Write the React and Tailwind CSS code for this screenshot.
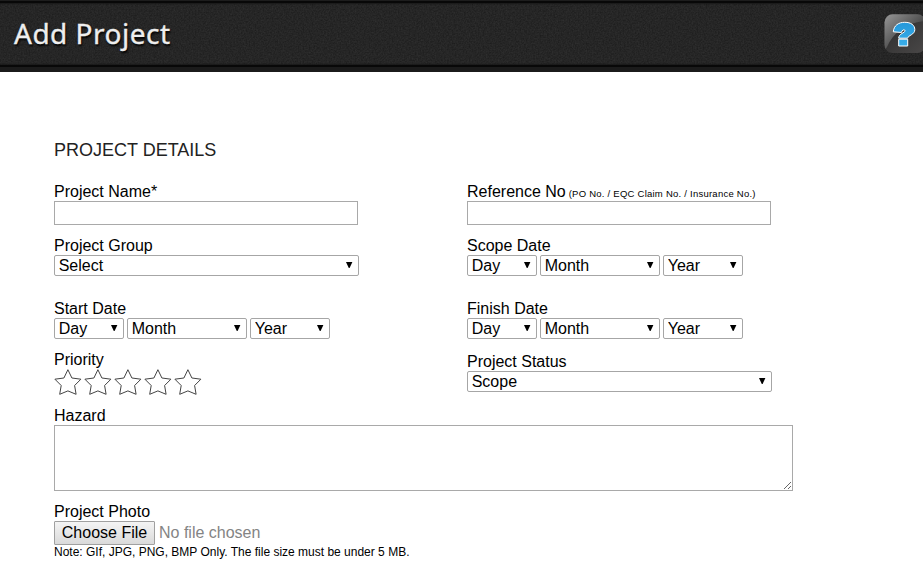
import React from "react";

function Label({ children }) {
  return <label className="block h-[19px] whitespace-nowrap text-base leading-[19px]">{children}</label>;
}

function Select({ value, width }) {
  return (
    <div className={`relative h-[21px] shrink-0 ${width}`}>
      <select className="block h-[21px] w-full appearance-none rounded-[2px] border border-[#a6a6a6] bg-white pl-[3.7px] text-base leading-[19px] text-black outline-none">
        <option>{value}</option>
      </select>
      <svg className="pointer-events-none absolute right-[6px] top-[7px] h-[7px] w-[7px]" viewBox="0 0 7 7">
        <path d="M0 0H6.4L3.6 6H2.8Z" fill="#000" />
      </svg>
    </div>
  );
}

function DateSelects() {
  return (
    <div className="flex gap-[3px]">
      <Select value="Day" width="w-[70px]" />
      <Select value="Month" width="w-[120px]" />
      <Select value="Year" width="w-[80px]" />
    </div>
  );
}

function TextField() {
  return <input type="text" className="block h-6 w-[304px] border border-[#a9a9a9] bg-white px-1 text-base outline-none" />;
}

function Star() {
  return (
    <svg className="h-7 w-[30px]" viewBox="0 0 30 28" fill="none">
      <path
        d="M13.9 0.7L17.9 9L26.9 10.2L20.6 16.5L22.1 25.3L13.9 21.9L5.7 25.3L7.2 16.5L0.9 10.2L9.9 9Z"
        stroke="#444"
        strokeWidth="1"
      />
    </svg>
  );
}

function HelpIcon() {
  return (
    <svg className="h-10 w-[39px] shrink-0" viewBox="0 0 39 40">
      <defs>
        <linearGradient id="gloss" x1="0" y1="0" x2="0.6" y2="0.6">
          <stop offset="0" stopColor="#999" />
          <stop offset="1" stopColor="#484848" />
        </linearGradient>
        <linearGradient id="plate" x1="0" y1="0" x2="1" y2="1">
          <stop offset="0" stopColor="#282828" />
          <stop offset="1" stopColor="#4a4848" />
        </linearGradient>
        <linearGradient id="mark" x1="0" y1="0" x2="0" y2="1">
          <stop offset="0" stopColor="#2598da" />
          <stop offset="1" stopColor="#39aee9" />
        </linearGradient>
        <clipPath id="tile">
          <rect x="0.5" y="0.3" width="41" height="38.7" rx="8" />
        </clipPath>
      </defs>
      <g clipPath="url(#tile)">
        <rect width="42" height="39" fill="url(#plate)" />
        <path d="M0 0H41V7C24 8 9 18 3 33L0 37Z" fill="url(#gloss)" />
      </g>
      <path
        d="M9.3 17.8C9.8 11.5 14.5 8.3 20.7 8.3C27 8.3 30.8 11.2 30.8 15.6C30.8 20.8 24 21.3 23.6 24.2H14.7C14.7 19.4 21 19 21 16.7C21 15.2 18 15.4 17.4 18.5Z M14.7 25.2H23.7V32H14.7Z"
        fill="url(#mark)"
        stroke="#fff"
        strokeWidth="1"
        strokeLinejoin="round"
      />
    </svg>
  );
}

function Header() {
  return (
    <header className="relative h-[72px] border-b-[5px] border-[#1b1b1b] bg-[#262626]">
      <svg className="absolute inset-0 h-[67px] w-full" aria-hidden="true">
        <filter id="grain" colorInterpolationFilters="sRGB">
          <feTurbulence type="fractalNoise" baseFrequency="0.65" numOctaves="2" seed="4" />
          <feColorMatrix values="0.12 0 0 0 0.09  0.12 0 0 0 0.09  0.12 0 0 0 0.09  0 0 0 0 1" />
        </filter>
        <rect width="100%" height="100%" filter="url(#grain)" opacity="0.8" />
      </svg>
      <div className="relative flex h-[67px] flex-col">
        <div className="h-px bg-[#1d1d1d]" />
        <div className="h-[2px] bg-[#080808]" />
        <div className="h-[2px] bg-linear-to-b from-[#181818] to-transparent" />
        <div className="flex h-[58px] items-start justify-between pl-[14px]">
          <h1 className="mt-[8px] whitespace-nowrap font-['Noto_Sans','Open_Sans',sans-serif] text-[28px] leading-[40px] tracking-[0.5px] text-[#eee] [-webkit-text-stroke:0.35px_#eee] [text-shadow:1px_2px_2px_#000]">
            Add Project
          </h1>
          <div className="mt-[9px]">
            <HelpIcon />
          </div>
        </div>
        <div className="h-[2px] bg-linear-to-t from-[#181818] to-transparent" />
        <div className="h-[2px] bg-[#080808]" />
      </div>
    </header>
  );
}

export default function App() {
  return (
    <div className="h-[583px] w-[923px] overflow-hidden bg-white font-['Liberation_Sans',Arial,sans-serif] text-black">
      <Header />
      <main className="pl-[54px] pt-[66px]">
        <h2 className="h-[44px] whitespace-nowrap text-lg leading-6 text-[#222]">PROJECT DETAILS</h2>
        <div className="flex">
          <div className="w-[413px]">
            <Label>Project Name*</Label>
            <TextField />
            <div className="mt-[11px]">
              <Label>Project Group</Label>
              <Select value="Select" width="w-[305px]" />
            </div>
            <div className="mt-[23px]">
              <Label>Start Date</Label>
              <DateSelects />
            </div>
            <div className="mt-[11px]">
              <Label>Priority</Label>
              <div className="flex">
                <Star />
                <Star />
                <Star />
                <Star />
                <Star />
              </div>
            </div>
          </div>
          <div>
            <Label>
              Reference No<span className="ml-[3px] text-[9.5px] tracking-[0.24px]">(PO No. / EQC Claim No. / Insurance No.)</span>
            </Label>
            <TextField />
            <div className="mt-[11px]">
              <Label>Scope Date</Label>
              <DateSelects />
            </div>
            <div className="mt-[23px]">
              <Label>Finish Date</Label>
              <DateSelects />
            </div>
            <div className="mt-[13px]">
              <Label>Project Status</Label>
              <Select value="Scope" width="w-[305px]" />
            </div>
          </div>
        </div>
        <div className="mt-[9px]">
          <Label>Hazard</Label>
          <textarea className="block h-[66px] w-[739px] resize border border-[#a9a9a9] bg-white outline-none" />
        </div>
        <div className="mt-[11px]">
          <Label>Project Photo</Label>
          <div className="flex h-6 items-center gap-1">
            <button className="h-6 w-[101px] whitespace-nowrap rounded-[1px] border border-[#a0a0a0] bg-linear-to-b from-[#f4f4f4] to-[#dadada] pb-px text-base leading-[21px]">
              Choose File
            </button>
            <span className="text-base leading-6 text-[#848484]">No file chosen</span>
          </div>
          <p className="whitespace-nowrap text-xs leading-[14px]">
            Note: GIf, JPG, PNG, BMP Only. The file size must be under 5 MB.
          </p>
        </div>
      </main>
    </div>
  );
}
